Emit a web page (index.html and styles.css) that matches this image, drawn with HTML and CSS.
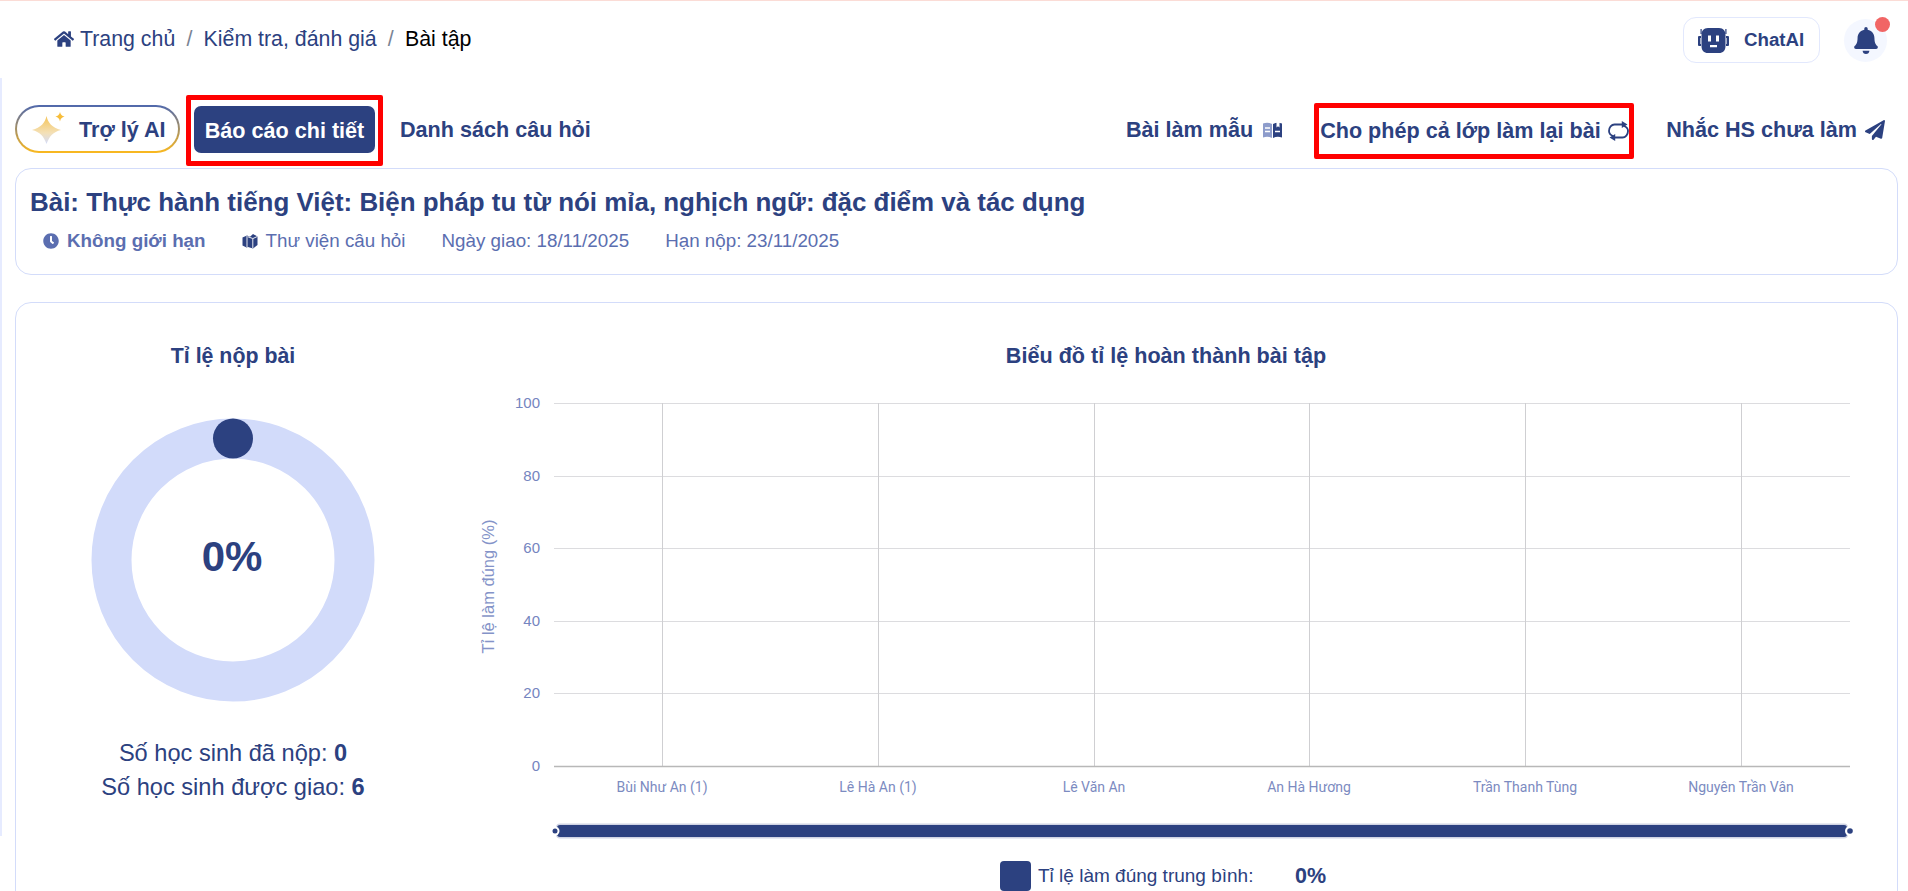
FILE: index.html
```html
<!DOCTYPE html>
<html lang="vi">
<head>
<meta charset="utf-8">
<title>Bài tập</title>
<link rel="stylesheet" href="styles.css">
</head>
<body>
<div class="page">
  <header class="header">
    <nav class="crumbs">
      <svg class="home" viewBox="0 0 576 512"><path d="M280.37 148.26L96 300.11V464a16 16 0 0 0 16 16l112.06-.29a16 16 0 0 0 15.92-16V368a16 16 0 0 1 16-16h64a16 16 0 0 1 16 16v95.64a16 16 0 0 0 16 16.05L464 480a16 16 0 0 0 16-16V300L295.67 148.26a12.19 12.19 0 0 0-15.3 0zM571.6 251.47L488 182.56V44.05a12 12 0 0 0-12-12h-56a12 12 0 0 0-12 12v72.61L318.47 43a48 48 0 0 0-61 0L4.34 251.47a12 12 0 0 0-1.6 16.9l25.5 31A12 12 0 0 0 45.15 301l235.22-193.74a12.19 12.19 0 0 1 15.3 0L530.9 301a12 12 0 0 0 16.9-1.6l25.5-31a12 12 0 0 0-1.7-16.93z"/></svg>
      <span>Trang chủ</span><span class="sep">/</span><span>Kiểm tra, đánh giá</span><span class="sep">/</span><span class="current">Bài tập</span>
    </nav>
    <div class="header-right">
      <button class="chatai">
        <svg class="robot" viewBox="0 0 31 25"><path d="M1 8h2v2h-.6v6H3v2H1a1 1 0 0 1-1-1V9a1 1 0 0 1 1-1zM28 8h2a1 1 0 0 1 1 1v8a1 1 0 0 1-1 1h-2v-2h.6v-6H28z"/><path d="M2.500 1h1.200v5H2.500zM27.300 1h1.200v5h-1.200z"/><path fill-rule="evenodd" d="M10 0h11c4.500 0 6.500 3 6.500 7v11c0 4.500-2.500 7-6.500 7H10c-4 0-6.500-2.500-6.500-7V7c0-4 2-7 6.500-7zM10 7.500v6h3v-6zM18 7.500v6h3v-6zM12 17v2.200h7V17z"/></svg>
        <span>ChatAI</span>
      </button>
      <div class="bell">
        <svg class="bell-icon" viewBox="0 0 448 512"><path d="M224 512c35.320 0 63.970-28.650 63.970-64H160.030c0 35.350 28.650 64 63.970 64zm215.390-149.710c-19.320-20.760-55.470-51.990-55.470-154.290 0-77.700-54.480-139.900-127.940-155.160V32c0-17.670-14.320-32-31.980-32s-31.980 14.330-31.980 32v20.840C118.560 68.100 64.080 130.300 64.080 208c0 102.300-36.150 133.530-55.470 154.290-6 6.450-8.660 14.160-8.610 21.710.11 16.400 12.980 32 32.100 32h383.800c19.120 0 32-15.600 32.100-32 .05-7.550-2.610-15.270-8.610-21.710z"/></svg>
        <i class="dot"></i>
      </div>
    </div>
  </header>

  <main class="main">
    <div class="tabs">
      <div class="tabs-left">
        <button class="ai-pill">
          <svg class="spark" viewBox="0 0 33 33">
            <defs><linearGradient id="sparkfill" x1="0" y1="0" x2="0" y2="1"><stop offset="0" stop-color="#f5c457"/><stop offset=".6" stop-color="#f4e0b6"/><stop offset="1" stop-color="#d3dcfa"/></linearGradient></defs>
            <path fill="url(#sparkfill)" d="M14.500 4C16 11 20 15.500 29 18c-8 2-11.500 6-14.500 14C11.500 24 8 20 0 18c9-2.500 13-7 14.500-14z"/>
            <path fill="#f7bd3a" d="M28 0c.6 2.600 1.800 3.800 4.600 4.600-2.800.8-4 2-4.600 4.800-.6-2.800-1.800-4-4.600-4.800 2.800-.8 4-2 4.600-4.600z"/>
          </svg>
          <span class="pill-label">Trợ lý AI</span>
        </button>
        <div class="mark mark-report"><button class="tab-active">Báo cáo chi tiết</button></div>
        <button class="tab">Danh sách câu hỏi</button>
      </div>
      <div class="tabs-right">
        <button class="tab tab-icon"><span>Bài làm mẫu</span>
          <svg class="book" viewBox="0 0 19 16"><path fill="#8d9ccb" d="M0 1.500C3 .5 6 .5 9 2v14c-3-1.500-6-1.500-9-.5z"/><path fill="#2c4180" d="M10 2c3-1.500 6-1.500 9-.5v14c-3-1-6-1-9 .5z"/><path stroke="#fff" stroke-width="1.300" d="M2 6h5M2 9.500h5M12 9.500h5" fill="none"/><path fill="#fff" d="M13.500 0h3v5.500L15 4.200l-1.500 1.300z"/></svg>
        </button>
        <div class="mark mark-redo"><button class="tab tab-icon"><span>Cho phép cả lớp làm lại bài</span>
          <svg class="sync" viewBox="0 0 21 20"><path class="sync-line" d="M5 15C2.500 14 1 12.200 1 10c0-3.500 2.500-6.500 5.500-6.500H15"/><path class="sync-line" d="M16 5c2.500 1 4 2.800 4 5 0 3.500-2.500 6.500-5.500 6.500H6"/><path class="sync-head" d="M13.800 0l5.700 3.500-5.700 3.500zM7.200 13v7l-5.700-3.500z"/></svg>
        </button></div>
        <button class="tab tab-icon"><span>Nhắc HS chưa làm</span>
          <svg class="plane" viewBox="0 0 512 512"><path d="M476 3.200L12.500 270.600c-18.100 10.400-15.800 35.600 2.200 43.200L121 358.400l287.300-253.200c5.500-4.900 13.300 2.600 8.600 8.300L176 407v80.500c0 23.600 28.500 32.900 42.500 15.800L282 426l124.600 52.200c14.200 6 30.400-2.900 33-18.200l72-432C515 7.800 493.300-6.800 476 3.200z"/></svg>
        </button>
      </div>
    </div>

    <section class="card info">
      <h1 class="info-title">Bài: Thực hành tiếng Việt: Biện pháp tu từ nói mỉa, nghịch ngữ: đặc điểm và tác dụng</h1>
      <div class="meta">
        <span class="meta-item meta-strong">
          <svg class="meta-icon" viewBox="0 0 512 512"><path d="M256 8C119 8 8 119 8 256s111 248 248 248 248-111 248-248S393 8 256 8zm92.490 313l-20 25a16 16 0 0 1-22.490 2.500l-67-49.720a40 40 0 0 1-15-31.230V112a16 16 0 0 1 16-16h32a16 16 0 0 1 16 16v144l58 42.500a16 16 0 0 1 2.490 22.500z"/></svg>
          Không giới hạn</span>
        <span class="meta-item">
          <svg class="meta-icon meta-books" viewBox="0 0 16 16"><path d="M0.500 4.500L5 2.500l3 1.200L11 1l4.500 2.500V12L11 15.500 6 14l-1.500.5L.5 12.500z"/><path class="book-line" d="M5 3v11M10.800 5.500v9.500M11 5.500l4.300-2M6 3.800l4.800 1.700"/></svg>
          Thư viện câu hỏi</span>
        <span class="meta-item">Ngày giao: 18/11/2025</span>
        <span class="meta-item">Hạn nộp: 23/11/2025</span>
      </div>
    </section>

    <section class="card stats">
      <div class="stats-left">
        <h2 class="stat-title">Tỉ lệ nộp bài</h2>
        <div class="donut">
          <svg class="donut-svg" viewBox="0 0 284 284">
            <circle class="donut-track" cx="142" cy="142" r="121.500"/>
            <circle class="donut-knob" cx="142" cy="20.500" r="20"/>
          </svg>
          <span class="donut-value">0%</span>
        </div>
        <p class="stat-line">Số học sinh đã nộp: <b>0</b></p>
        <p class="stat-line">Số học sinh được giao: <b>6</b></p>
      </div>
      <div class="stats-right">
        <h2 class="stat-title chart-title">Biểu đồ tỉ lệ hoàn thành bài tập</h2>
        <svg class="chart" viewBox="0 0 1426 460" width="1426" height="460">
          <g class="grid-h">
            <path d="M84 13.500H1380M84 86.500H1380M84 158.500H1380M84 231.500H1380M84 303.500H1380"/>
          </g>
          <g class="grid-v">
            <path d="M192.500 13V376M408.500 13V376M624.500 13V376M839.500 13V376M1055.500 13V376M1271.500 13V376"/>
          </g>
          <path class="axis" d="M84 376.500H1380"/>
          <g class="y-labels">
            <text x="70" y="18">100</text>
            <text x="70" y="91">80</text>
            <text x="70" y="163">60</text>
            <text x="70" y="236">40</text>
            <text x="70" y="308">20</text>
            <text x="70" y="381">0</text>
          </g>
          <text class="y-name" transform="translate(24 196.500) rotate(-90)">Tỉ lệ làm đúng (%)</text>
          <g class="x-labels">
            <text x="192" y="402">Bùi Như An (1)</text>
            <text x="408" y="402">Lê Hà An (1)</text>
            <text x="624" y="402">Lê Văn An</text>
            <text x="839" y="402">An Hà Hương</text>
            <text x="1055" y="402">Trần Thanh Tùng</text>
            <text x="1271" y="402">Nguyên Trần Vân</text>
          </g>
          <rect class="zoom-edge" x="86" y="433.500" width="1292" height="15" rx="4"/>
          <rect class="zoom-bar" x="87" y="435" width="1290" height="12" rx="3"/>
          <circle class="zoom-halo" cx="85" cy="441" r="4.500"/>
          <circle class="zoom-bar" cx="85" cy="441" r="2.500"/>
          <circle class="zoom-halo" cx="1380" cy="441" r="5"/>
          <circle class="zoom-bar" cx="1380" cy="441" r="2.800"/>
        </svg>
        <div class="legend">
          <i class="legend-box"></i>
          <span class="legend-text">Tỉ lệ làm đúng trung bình:</span>
          <b class="legend-value">0%</b>
        </div>
      </div>
    </section>
  </main>
</div>
</body>
</html>
```

FILE: styles.css
```css
* { box-sizing: border-box; }
html, body { margin: 0; padding: 0; }
body {
  background: #fff;
  color: #2c4180;
  font-family: "Liberation Sans", Arial, sans-serif;
  overflow: hidden;
}
button {
  font: inherit;
  color: inherit;
  background: none;
  border: 0;
  padding: 0;
  margin: 0;
}
svg { display: block; flex: none; fill: currentColor; }
.page {
  height: 891px;
  overflow: hidden;
  border-top: 1px solid #fbdcd6;
}
.header {
  height: 77px;
  display: flex;
  justify-content: space-between;
  align-items: flex-start;
  padding: 16px 21px 0 54px;
}
.crumbs {
  display: flex;
  align-items: center;
  height: 44px;
  font-size: 21.33px;
  line-height: 44px;
}
.home { width: 20px; height: 18px; margin-right: 6px; }
.sep { color: #7a8494; margin: 0 11.2px; }
.current { color: #000; }
.header-right { display: flex; align-items: flex-start; gap: 24px; }
.chatai {
  width: 137px;
  height: 46px;
  display: flex;
  align-items: center;
  padding-left: 14px;
  gap: 15px;
  border: 1px solid #e2e8fd;
  border-radius: 13px;
  font-size: 18.7px;
  font-weight: 700;
}
.robot { width: 31px; height: 25px; }
.bell {
  position: relative;
  width: 43px;
  height: 43px;
  margin-top: 2px;
  background: #f4f7ff;
  border-radius: 50%;
  display: flex;
  align-items: center;
  justify-content: center;
}
.bell-icon { width: 24px; height: 27px; }
.dot {
  position: absolute;
  top: -2px;
  right: -3px;
  width: 15px;
  height: 15px;
  border-radius: 50%;
  background: #f16565;
}
.main {
  padding: 0 10px 0 15px;
  background: linear-gradient(#e6ebff, #e6ebff) no-repeat 0 0 / 2px 758px;
}
.tabs {
  height: 90px;
  display: flex;
  justify-content: space-between;
  align-items: center;
  padding-top: 12px;
  padding-right: 13px;
  font-size: 21.6px;
  font-weight: 700;
}
.tabs-left, .tabs-right { display: flex; align-items: center; }
.ai-pill {
  width: 165px;
  height: 48px;
  display: flex;
  align-items: center;
  gap: 14px;
  padding-left: 15px;
  border: 2px solid transparent;
  border-radius: 24px;
  background:
    linear-gradient(#fff, #fff) padding-box,
    linear-gradient(#4f68ad, #fbb91e) border-box;
}
.pill-label { padding-top: 1px; }
.spark { width: 33px; height: 33px; margin-top: -2px; }
.mark {
  display: flex;
  border: 5px solid #f00;
  border-radius: 2px;
}
.mark-report {
  width: 197px;
  height: 71px;
  margin: 3px 0 0 6px;
  padding: 6px 3px 0;
  align-items: flex-start;
}
.tab-active {
  width: 181px;
  height: 47px;
  padding-top: 2px;
  background: #2c4180;
  color: #fff;
  border-radius: 7px;
  white-space: nowrap;
}
.tabs-left > .tab { margin-left: 17px; }
.tab { white-space: nowrap; padding-top: 2px; }
.tab-icon { display: flex; align-items: center; }
.book { width: 19px; height: 16px; margin-left: 10px; }
.sync { width: 21px; height: 20px; margin-left: 7px; }
.sync-line { fill: none; stroke: #2c4180; stroke-width: 1.8; }
.sync-head { fill: #2c4180; }
.plane { width: 20px; height: 20px; margin-left: 8px; }
.mark-redo {
  width: 320px;
  height: 56px;
  margin: 4px 32px 0 32px;
  padding: 0 0 2px 1px;
  align-items: center;
}
.card {
  border: 1px solid #d3dcfa;
  border-radius: 16px;
  background: #fff;
}
.info {
  height: 107px;
  padding: 17px 14px 0;
}
.info-title {
  margin: 0;
  font-size: 25.93px;
  line-height: 32px;
  font-weight: 700;
}
.meta {
  display: flex;
  gap: 36px;
  margin-top: 8px;
  padding-left: 13px;
  font-size: 18.8px;
  line-height: 30px;
  color: #5b6eb0;
}
.meta-item { display: flex; align-items: center; gap: 8px; white-space: nowrap; }
.meta-strong { font-weight: 700; }
.meta-icon { width: 16px; height: 16px; }
.meta-books { color: #2c4180; }
.book-line { fill: none; stroke: #fff; stroke-width: .9; }
.stats {
  margin-top: 27px;
  height: 640px;
  display: flex;
  padding-top: 39px;
}
.stats-left {
  width: 434px;
  flex: none;
  text-align: center;
}
.stats-right {
  width: 1426px;
  flex: none;
  margin-left: 20px;
}
.stat-title {
  margin: 0;
  font-size: 21.33px;
  line-height: 28px;
  font-weight: 700;
  text-align: center;
}
.chart-title { font-size: 21.6px; padding-right: 34px; }
.donut {
  position: relative;
  width: 284px;
  height: 284px;
  margin: 48px auto 0;
}
.donut-svg { width: 284px; height: 284px; }
.donut-track { fill: none; stroke: #d2dbfa; stroke-width: 40; }
.donut-knob { fill: #2c4180; }
.donut-value {
  position: absolute;
  left: -1px;
  right: 1px;
  top: 113px;
  font-size: 42px;
  line-height: 52px;
  font-weight: 700;
  text-align: center;
}
.stat-line {
  margin: 0;
  font-size: 23.6px;
  line-height: 34px;
}
.donut + .stat-line { margin-top: 34px; }
.chart { margin-top: 20px; }
.grid-h path { stroke: #dcdcdf; stroke-width: 1; fill: none; }
.grid-v path { stroke: #cfcfd2; stroke-width: 1; fill: none; }
.axis { stroke: #b8b8b8; stroke-width: 1.5; fill: none; }
.y-labels text {
  font: 15px "Liberation Sans", Arial, sans-serif;
  fill: #7585c0;
  text-anchor: end;
}
.y-name {
  font: 16.5px "Liberation Sans", Arial, sans-serif;
  fill: #8493c8;
  text-anchor: middle;
}
.x-labels text {
  font: 14px Roboto, sans-serif;
  fill: #7c8bc1;
  text-anchor: middle;
}
.zoom-edge { fill: #d0d4e4; }
.zoom-bar { fill: #2c4180; }
.zoom-halo { fill: #fff; }
.legend {
  display: flex;
  align-items: center;
  margin: 11px 0 0 530px;
  height: 30px;
}
.legend-box {
  width: 31px;
  height: 30px;
  background: #2c4180;
  border-radius: 4px;
}
.legend-text {
  margin-left: 7px;
  width: 257px;
  font-size: 19px;
  white-space: nowrap;
}
.legend-value { font-size: 21.5px; }
```
